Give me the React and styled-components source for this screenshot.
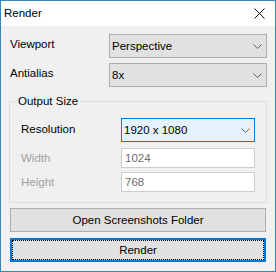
import React from 'react';
import styled, { createGlobalStyle } from 'styled-components';

const GlobalStyle = createGlobalStyle`
  html, body {
    margin: 0;
    padding: 0;
    background: #f0f0f0;
  }
  body {
    font-family: "Liberation Sans", Arial, sans-serif;
    font-size: 11.5px;
    color: #000;
  }
`;

const Window = styled.div`
  width: 276px;
  height: 272px;
  box-sizing: border-box;
  border: 1px solid #3488b5;
  background: #f0f0f0;
  display: flex;
  flex-direction: column;
`;

const TitleBar = styled.div`
  height: 25px;
  flex: none;
  background: #fff;
  display: flex;
  align-items: center;
  padding: 0 10px 0 3px;
`;

const Title = styled.span`
  flex: 1;
  margin-bottom: 2px;
`;

const Body = styled.div`
  flex: 1;
  display: flex;
  flex-direction: column;
  padding: 8px 8px 0 8px;
`;

const Row = styled.div`
  display: flex;
  align-items: center;
  margin-top: ${(p) => p.$top || 0}px;
`;

const Label = styled.span`
  margin-left: ${(p) => p.$indent || 0}px;
  margin-bottom: ${(p) => (p.$lift || 0) * 2}px;
  color: ${(p) => (p.$disabled ? '#a0a0a0' : '#000')};
`;

const Combo = styled.div`
  margin-left: auto;
  width: ${(p) => p.$width}px;
  height: 24px;
  box-sizing: border-box;
  display: flex;
  align-items: center;
  padding: 0 4px 0 2px;
  border: 1px solid ${(p) => (p.$focused ? '#0078d7' : '#adadad')};
  background: ${(p) => (p.$focused ? '#e5f1fb' : '#e1e1e1')};
`;

const ComboText = styled.span`
  flex: 1;
`;

const TextBox = styled.div`
  margin-left: auto;
  width: 134px;
  height: 20px;
  box-sizing: border-box;
  display: flex;
  align-items: center;
  padding: 0 3px;
  border: 1px solid #cccccc;
  background: #fff;
  color: #6d6d6d;
`;

const Group = styled.fieldset`
  margin: 7px 0 0 0;
  padding: 9px 11px 10px 11px;
  border: 1px solid #dcdcdc;
  min-width: 0;
`;

const Legend = styled.legend`
  margin-left: -5px;
  padding: 0 2px;
  line-height: 15px;
`;

const Button = styled.div`
  margin: ${(p) => p.$top}px 1px 0 1px;
  height: 24px;
  box-sizing: border-box;
  border: ${(p) => (p.$default ? '2px solid #0078d7' : '1px solid #adadad')};
  background: #e1e1e1;
  display: flex;
  align-items: stretch;
`;

const ButtonFace = styled.span`
  flex: 1;
  display: flex;
  align-items: center;
  justify-content: center;
  border: 1px ${(p) => (p.$focus ? 'dotted #000' : 'solid transparent')};
`;

const Chevron = () => (
  <svg width="9" height="5" viewBox="0 0 9 5">
    <polyline points="0.5,0.5 4.5,4.5 8.5,0.5" fill="none" stroke="#606060" strokeWidth="1" />
  </svg>
);

const CloseIcon = () => (
  <svg width="11" height="11" viewBox="0 0 11 11">
    <path d="M0.5 0.5 L10.5 10.5 M10.5 0.5 L0.5 10.5" stroke="#111" strokeWidth="1" />
  </svg>
);

export default function App() {
  return (
    <>
      <GlobalStyle />
      <Window>
        <TitleBar>
          <Title>Render</Title>
          <CloseIcon />
        </TitleBar>
        <Body>
          <Row>
            <Label $indent={1} $lift={2}>Viewport</Label>
            <Combo $width={158}>
              <ComboText>Perspective</ComboText>
              <Chevron />
            </Combo>
          </Row>
          <Row $top={5}>
            <Label $indent={1} $lift={2}>Antialias</Label>
            <Combo $width={158}>
              <ComboText>8x</ComboText>
              <Chevron />
            </Combo>
          </Row>
          <Group>
            <Legend>Output Size</Legend>
            <Row>
              <Label $lift={1}>Resolution</Label>
              <Combo $width={134} $focused>
                <ComboText>1920 x 1080</ComboText>
                <Chevron />
              </Combo>
            </Row>
            <Row $top={6}>
              <Label $disabled>Width</Label>
              <TextBox>1024</TextBox>
            </Row>
            <Row $top={4}>
              <Label $disabled>Height</Label>
              <TextBox>768</TextBox>
            </Row>
          </Group>
          <Button $top={5}>
            <ButtonFace>Open Screenshots Folder</ButtonFace>
          </Button>
          <Button $top={6} $default>
            <ButtonFace $focus>Render</ButtonFace>
          </Button>
        </Body>
      </Window>
    </>
  );
}
